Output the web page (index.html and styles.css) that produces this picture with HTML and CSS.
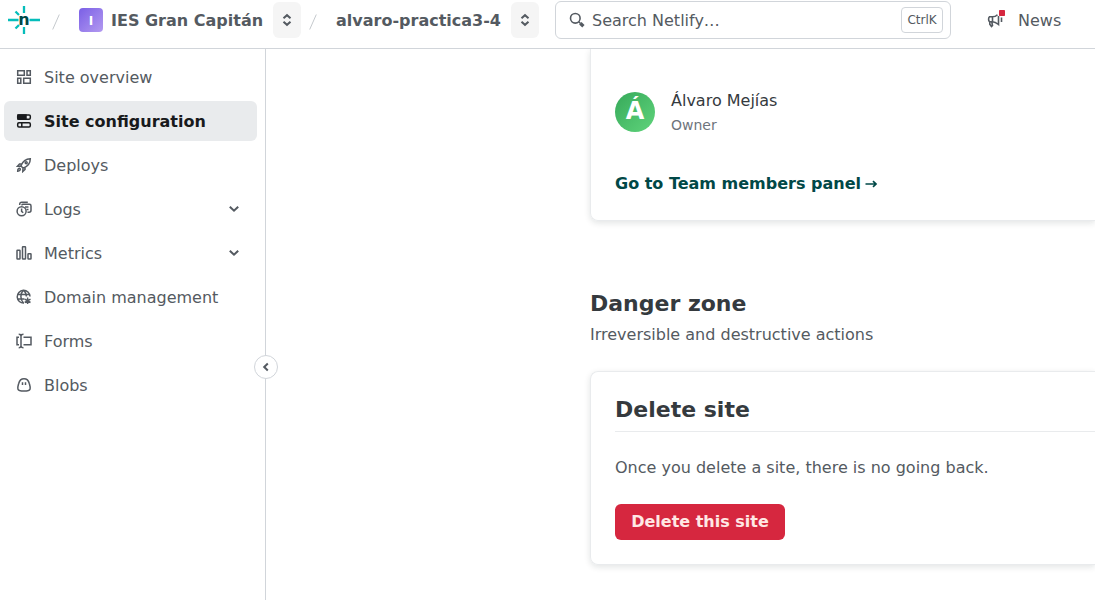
FILE: index.html
```html
<!DOCTYPE html>
<html lang="en">
<head>
<meta charset="utf-8">
<title>Site configuration | Netlify</title>
<link rel="stylesheet" href="styles.css">
</head>
<body>
<header class="topbar">
  <svg class="logo" width="32" height="28" viewBox="0 0 32 28" fill="none" stroke="#05bdba" stroke-width="2.3">
    <path d="M0 14H10.500M21.500 14H32M16 0V7M16 21V28M7.500 5.500L11 9M7.500 22.500L11 19"/>
    <text class="logo-n" x="16" y="18.500" text-anchor="middle">n</text>
  </svg>
  <svg class="slash" width="8" height="16" viewBox="0 0 8 16"><path d="M7.300 .5L.7 15.500" stroke="#c5c9cd" fill="none"/></svg>
  <span class="team-badge">I</span>
  <span class="crumb team">IES Gran Capitán</span>
  <button class="switcher"><svg width="10" height="14" viewBox="0 0 10 14"><path d="M1.500 5.300L5 2.200L8.500 5.300M1.500 8.700L5 11.800L8.500 8.700"/></svg></button>
  <svg class="slash second" width="8" height="16" viewBox="0 0 8 16"><path d="M7.300 .5L.7 15.500" stroke="#c5c9cd" fill="none"/></svg>
  <span class="crumb site">alvaro-practica3-4</span>
  <button class="switcher"><svg width="10" height="14" viewBox="0 0 10 14"><path d="M1.500 5.300L5 2.200L8.500 5.300M1.500 8.700L5 11.800L8.500 8.700"/></svg></button>
  <div class="search">
    <svg width="16" height="16" viewBox="0 0 16 16" fill="none" stroke="#545a61"><circle cx="6.300" cy="6.300" r="4.800" stroke-width="1.600"/><path d="M9.800 9.800L11.500 11.500" stroke-width="1.500"/><path d="M11.300 11.300L14.400 14.300" stroke-width="3.300"/></svg>
    <span class="placeholder">Search Netlify…</span>
    <kbd>CtrlK</kbd>
  </div>
  <a class="news">
    <svg width="20" height="20" viewBox="0 0 20 20" fill="none" stroke="#545a61" stroke-width="1.600">
      <path d="M11.500 4.700C10 6.200 8.500 6.800 6.500 6.800H3.500C2.300 8 2.300 10.500 3.500 11.800H6.500C8.500 11.800 10 12.500 12.500 14.500V6M6.500 6.800V11.800M3.800 12V14.200L5.500 16.500L6.500 15.500L5.800 12M15.500 7.500V12"/>
      <rect x="13" y="0" width="6" height="6" rx=".7" fill="#d6273f" stroke="none"/>
    </svg>
    <span>News</span>
  </a>
</header>
<div class="layout">
  <nav class="sidebar">
    <a class="item"><svg class="icon" viewBox="0 0 16 16"><path d="M1.700 1.700H8.300V6.300H1.700ZM11 1.700H14.300V6.300H11ZM1.700 9.300H4.800V14.300H1.700ZM7.700 9.300H14.300V14.300H7.700Z"/></svg><span>Site overview</span></a>
    <a class="item active"><svg class="icon" viewBox="0 0 16 16"><rect x="1.700" y="1.900" width="12.600" height="4.300" rx="1.200"/><path d="M2 2H10V6H2Z" fill="currentColor"/><rect x="1.700" y="9.700" width="12.600" height="4.300" rx="1.200"/><path d="M5.800 10V14"/></svg><span>Site configuration</span></a>
    <a class="item"><svg class="icon" viewBox="0 0 16 16"><path d="M6 10L4.900 8.800C6.500 4.700 9.500 1.700 14.300 1.700C14.300 6.500 11.300 9.500 7.200 11.100ZM5.600 7H3.500L1.500 9.200L4.900 9M9 10.400V12.500L6.800 14.500L7 11M1.700 14.300C1.700 12.500 2.200 11.300 3.700 11.300C5.200 12.200 3.700 14.300 1.700 14.300Z"/><circle cx="10.200" cy="5.800" r="1"/></svg><span>Deploys</span></a>
    <a class="item"><svg class="icon" viewBox="0 0 16 16"><circle cx="5.600" cy="10.300" r="4.500"/><path d="M5.600 7.600V10.400L7.200 11.800M3.700 4V3.400Q3.700 1.200 5.800 1.200H11.800M6 4.500V4Q6 3.300 7 3.300H13.500Q15 3.300 15 5V9.300Q15 11.300 13 11.300H11.500M9 5.900H12.500M10.500 8.500H12.500"/></svg><span>Logs</span><svg class="chevron" width="12" height="8" viewBox="0 0 12 8"><path d="M1.800 1.700L6 5.700L10.200 1.700"/></svg></a>
    <a class="item"><svg class="icon" viewBox="0 0 16 16"><rect x="1" y="5.300" width="3" height="8.700" rx=".5"/><rect x="6.500" y="1.700" width="3" height="12.300" rx=".5"/><rect x="12" y="8.700" width="3" height="5.300" rx=".5"/></svg><span>Metrics</span><svg class="chevron" width="12" height="8" viewBox="0 0 12 8"><path d="M1.800 1.700L6 5.700L10.200 1.700"/></svg></a>
    <a class="item"><svg class="icon" viewBox="0 0 16 16"><path d="M14 7.500A6.400 6.400 0 1 0 8 14.100M7.500 1.300C4 4.500 4 10.500 7.500 14M7.500 1.300C10 3.500 10.500 5.500 10.400 7.500M1.500 5.500H13.500M1.500 10H8.500"/><path d="M11.600 8.600V15M8.700 10.200L14.500 13.500M8.700 13.500L14.500 10.200"/></svg><span>Domain management</span></a>
    <a class="item"><svg class="icon" viewBox="0 0 16 16"><path d="M2.700 1.300Q5 1.300 5 3V13Q5 14.700 2.700 14.700M7.500 1.300Q5 1.300 5 3M7.500 14.700Q5 14.700 5 13M3 4.200H1V11.700H3M7.500 4.200H15V11.700H7.500"/></svg><span>Forms</span></a>
    <a class="item"><svg class="icon" viewBox="0 0 16 16"><path d="M8 1.700C11 1.700 12.700 4 13.300 6.500C14 9 14.600 10.500 14.100 12C13.600 13.500 12 14.100 8 14.100C4 14.100 2.400 13.500 1.900 12C1.400 10.500 2 9 2.700 6.500C3.300 4 5 1.700 8 1.700ZM6.500 5.300V8M9.500 5.300V8"/></svg><span>Blobs</span></a>
    <button class="collapse"><svg width="8" height="10" viewBox="0 0 8 10"><path d="M5.800 1.500L2.200 5L5.800 8.500"/></svg></button>
  </nav>
  <main class="content">
    <section class="card members">
      <div class="member">
        <span class="avatar">Á</span>
        <div class="member-info"><span class="name">Álvaro Mejías</span><span class="role">Owner</span></div>
      </div>
      <a class="team-link">Go to Team members panel <svg width="13" height="10" viewBox="0 0 13 10"><path d="M.5 5H11M8 2.200L11 5L8 7.800"/></svg></a>
    </section>
    <h2 class="zone-title">Danger zone</h2>
    <p class="zone-text">Irreversible and destructive actions</p>
    <section class="card danger">
      <h3>Delete site</h3>
      <p>Once you delete a site, there is no going back.</p>
      <button class="delete">Delete this site</button>
    </section>
  </main>
</div>
</body>
</html>
```
FILE: styles.css
```css
* { box-sizing: border-box; }
body { margin: 0; height: 600px; overflow: hidden; background: #fff; color: #545a61; font: 16px/24px "DejaVu Sans", sans-serif; }
button { border: 0; padding: 0; font: inherit; }
h2, h3, p { margin: 0; }
.topbar { height: 49px; padding: 0 0 8px 8px; display: flex; align-items: center; border-bottom: 1px solid #d1d5da; white-space: nowrap; }
.topbar > * { flex: none; }
.logo-n { font: bold 16px "DejaVu Sans", sans-serif; fill: #014847; stroke: none; }
.slash { margin: 4px 19px 0 12px; }
.slash.second { margin: 4px 19px 0 8px; }
.team-badge { width: 24px; height: 24px; margin-right: 8px; border-radius: 4px; background: linear-gradient(135deg, #7a5fe6, #b39af0); color: #fff; font-size: 12px; line-height: 26px; font-weight: bold; text-align: center; }
.crumb { padding-top: 1px; font-weight: bold; }
.team { width: 162px; }
.site { width: 175px; }
.switcher { width: 28px; height: 36px; border-radius: 6px; background: #f5f5f5; display: flex; align-items: center; justify-content: center; }
.switcher path, .chevron path, .collapse path { fill: none; stroke: #545a61; stroke-width: 2; }
.search { width: 396px; height: 38px; margin-left: 16px; padding: 0 7px 0 13px; display: flex; align-items: center; border: 1px solid #d1d5da; border-radius: 6px; }
.placeholder { margin-left: 7px; padding-top: 2px; flex: 1; }
kbd { width: 42px; height: 26px; border: 1px solid #d1d5da; border-radius: 4px; font: 12px/24px "DejaVu Sans", sans-serif; text-align: center; }
.news { display: flex; align-items: center; gap: 12px; margin-left: 35px; }
.news span { padding-top: 1px; }
.layout { display: flex; height: 551px; }
.sidebar { position: relative; flex: none; width: 266px; padding: 8px 8px 0 4px; border-right: 1px solid #d1d5da; display: flex; flex-direction: column; gap: 4px; }
.item { height: 40px; padding: 0 17px 0 12px; display: flex; align-items: center; border-radius: 6px; }
.item span { padding-top: 2px; }
.item.active { background: #e9ebed; color: #181a1c; font-weight: bold; }
.icon { width: 16px; height: 16px; margin-right: 12px; fill: none; stroke: currentColor; stroke-width: 1.500; }
.chevron { margin-left: auto; }
.collapse { position: absolute; right: -13px; top: 306px; width: 24px; height: 24px; border: 1px solid #d1d5da; border-radius: 50%; background: #fff; display: flex; align-items: center; justify-content: center; }
.content { flex: 1; min-width: 0; padding-left: 324px; }
.card { border: 1px solid #e9ebed; border-right: 0; border-radius: 8px 0 0 8px; padding: 0 0 0 24px; box-shadow: 0 2px 6px rgba(14, 30, 37, .12); }
.members { height: 172px; padding-top: 39px; border-top: 0; border-radius: 0 0 0 8px; clip-path: inset(0 0 -20px -20px); }
.member { display: flex; align-items: center; height: 48px; }
.avatar { width: 40px; height: 40px; margin-right: 16px; border-radius: 50%; background: linear-gradient(135deg, #36a95a, #60d47b); color: #fff; font-size: 24px; line-height: 39px; font-weight: bold; text-align: center; }
.member-info { display: flex; flex-direction: column; padding-top: 2px; }
.name { color: #353a3e; }
.role { color: #6e757c; font-size: 14px; line-height: 25px; }
.team-link { display: block; margin-top: 36px; color: #014847; font-weight: bold; white-space: nowrap; }
.team-link svg { margin-left: -2px; fill: none; stroke: currentColor; stroke-width: 1.700; }
.zone-title { margin-top: 67px; color: #353a3e; font-size: 22px; line-height: 32px; }
.zone-text { margin-top: 3px; }
.danger { height: 194px; margin-top: 24px; padding-top: 22px; }
.danger h3 { height: 38px; color: #353a3e; font-size: 22px; line-height: 32px; border-bottom: 1px solid #e9ebed; }
.danger p { margin-top: 24px; }
.delete { margin-top: 24px; width: 170px; height: 36px; border-radius: 6px; background: #d6273f; color: #ffe8e5; font-weight: bold; }
```
